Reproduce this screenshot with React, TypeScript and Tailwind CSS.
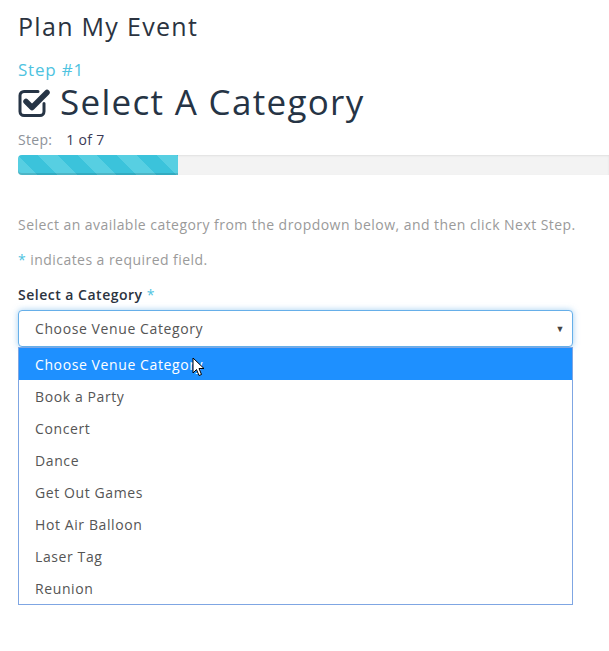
import { useState } from 'react';

const categories = [
  'Choose Venue Category',
  'Book a Party',
  'Concert',
  'Dance',
  'Get Out Games',
  'Hot Air Balloon',
  'Laser Tag',
  'Reunion',
];

// FA4-style "check-square-o"
const CheckSquareIcon = () => (
  <svg width="33" height="31" viewBox="0 0 33 31" fill="none">
    <path
      d="M26 16.5 V24.5 A4 4 0 0 1 22 28.5 H6 A4 4 0 0 1 2 24.5 V8.5 A4 4 0 0 1 6 4.5 H20"
      stroke="#263445"
      strokeWidth="3"
      strokeLinecap="round"
    />
    <path d="M8 14.5 L14 20.5 L29 5.5" stroke="#263445" strokeWidth="5.5" strokeLinecap="round" strokeLinejoin="round" />
  </svg>
);

const Cursor = () => (
  <svg width="13" height="20" viewBox="0 0 13 20" className="absolute left-[173px] top-[9px]">
    <path d="M1 1 L1 16 L4.5 12.5 L7 18.5 L9.5 17.5 L7 11.5 L12 11.5 Z" fill="#fff" stroke="#000" strokeWidth="1" strokeLinejoin="round" />
  </svg>
);

export default function App() {
  const [selected, setSelected] = useState(0);

  return (
    <div className="w-[609px] h-[651px] overflow-hidden bg-white px-[18px] pt-[11px] font-['Open_Sans',sans-serif]">
      <h1 className="text-[25px] leading-[30px] tracking-[1.3px] text-[#2b3340]">Plan My Event</h1>

      <div className="mt-[19px] text-[17px] leading-[20px] tracking-[0.8px] text-[#4ec3df]">Step #1</div>

      <h2 className="mt-[2px] flex items-center gap-[9px] text-[35px] leading-[40px] tracking-[1.3px] text-[#263445]">
        <CheckSquareIcon />
        <span>Select A Category</span>
      </h2>

      <div className="mt-[8px] flex gap-[14px] text-[14px] leading-[20px] tracking-[0.3px]">
        <span className="text-[#8d9299]">Step:</span>
        <span className="text-[#3b3a55]">1 of 7</span>
      </div>

      <div className="mt-[5px] -mr-[18px] h-[20px] rounded-l-[4px] bg-[#f3f3f3] shadow-[inset_0_1px_2px_rgba(0,0,0,0.08)]">
        <div className="h-full w-[160px] rounded-l-[4px] bg-[repeating-linear-gradient(45deg,#57cfe2_0,#57cfe2_14px,#3bc3db_14px,#3bc3db_28px)] shadow-[inset_0_-2px_0_rgba(0,0,0,0.12)]" />
      </div>

      <p className="mt-[40px] text-[14px] leading-[20px] tracking-[0.45px] text-[#9a9a9a]">
        Select an available category from the dropdown below, and then click Next Step.
      </p>

      <p className="mt-[15px] text-[14px] leading-[20px] tracking-[0.45px] text-[#9a9a9a]">
        <span className="text-[#4ec3df]">*</span> indicates a required field.
      </p>

      <label className="mt-[15px] block text-[14px] font-semibold leading-[20px] tracking-[0.5px] text-[#2b3340]">
        Select a Category <span className="font-normal text-[#4ec3df]">*</span>
      </label>

      <div className="relative mt-[5px] w-[555px] tracking-[0.6px]">
        <div className="flex h-[37px] items-center justify-between rounded-[4px] border border-[#66afe9] bg-white pl-[16px] pr-[7px] text-[14px] text-[#555] shadow-[0_0_6px_rgba(102,175,233,0.6)]">
          <span>{categories[selected]}</span>
          <span className="text-[9px] text-[#444]">▼</span>
        </div>

        <ul className="absolute left-0 top-full w-full border border-[#7fa6e3] bg-white text-[14px]">
          {categories.map((c, i) => (
            <li
              key={c}
              onClick={() => setSelected(i)}
              className={`relative flex h-[32px] items-center pl-[16px] ${
                i === 0 ? 'bg-[#1e90ff] text-white' : 'text-[#555]'
              }`}
            >
              {c}
              {i === 0 && <Cursor />}
            </li>
          ))}
        </ul>
      </div>
    </div>
  );
}
